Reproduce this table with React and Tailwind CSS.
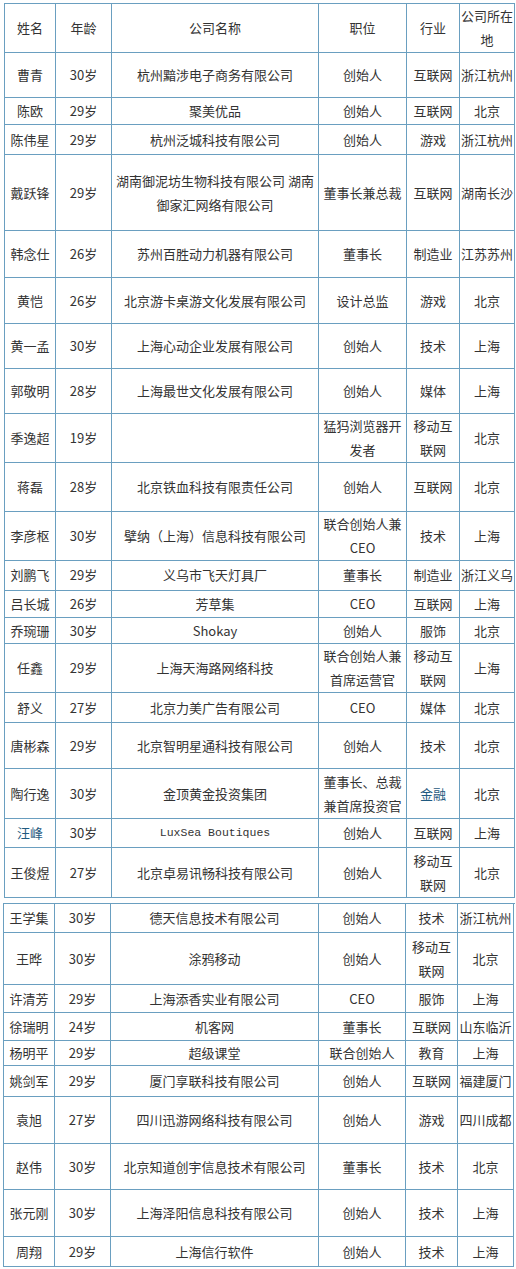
import clsx from 'clsx';

const colsA = 'grid-cols-[51px_56px_207px_88px_53px_55px]';
const colsB = 'grid-cols-[51px_56px_208px_87px_52px_56px]';

// each row: [h, name, age, company, title, industry, city]; '/' splits lines
const pieceOne = [
    ['h-[45px]', '曹青', '30岁', '杭州黯涉电子商务有限公司', '创始人', '互联网', '浙江杭州'],
    ['h-[27px]', '陈欧', '29岁', '聚美优品', '创始人', '互联网', '北京'],
    ['h-[30px]', '陈伟星', '29岁', '杭州泛城科技有限公司', '创始人', '游戏', '浙江杭州'],
    ['h-[76px]', '戴跃锋', '29岁', '湖南御泥坊生物科技有限公司 湖南/御家汇网络有限公司', '董事长兼总裁', '互联网', '湖南长沙'],
    ['h-[47px]', '韩念仕', '26岁', '苏州百胜动力机器有限公司', '董事长', '制造业', '江苏苏州'],
    ['h-[46px]', '黄恺', '26岁', '北京游卡桌游文化发展有限公司', '设计总监', '游戏', '北京'],
    ['h-[45px]', '黄一孟', '30岁', '上海心动企业发展有限公司', '创始人', '技术', '上海'],
    ['h-[45px]', '郭敬明', '28岁', '上海最世文化发展有限公司', '创始人', '媒体', '上海'],
    ['h-[48px]', '季逸超', '19岁', '', '猛犸浏览器开/发者', '移动互/联网', '北京'],
];

const pieceTwo = [
    ['h-[49px]', '蒋磊', '28岁', '北京铁血科技有限责任公司', '创始人', '互联网', '北京'],
    ['h-[48px]', '李彦枢', '30岁', '擘纳（上海）信息科技有限公司', '联合创始人兼/CEO', '技术', '上海'],
    ['h-[31px]', '刘鹏飞', '29岁', '义乌市飞天灯具厂', '董事长', '制造业', '浙江义乌'],
    ['h-[27px]', '吕长城', '26岁', '芳草集', 'CEO', '互联网', '上海'],
    ['h-[26px]', '乔琬珊', '30岁', 'Shokay', '创始人', '服饰', '北京'],
    ['h-[49px]', '任鑫', '29岁', '上海天海路网络科技', '联合创始人兼/首席运营官', '移动互/联网', '上海'],
    ['h-[30px]', '舒义', '27岁', '北京力美广告有限公司', 'CEO', '媒体', '北京'],
    ['h-[46px]', '唐彬森', '29岁', '北京智明星通科技有限公司', '创始人', '技术', '北京'],
    ['h-[50px]', '陶行逸', '30岁', '金顶黄金投资集团', '董事长、总裁/兼首席投资官', '金融', '北京'],
    ['h-[29px]', '汪峰', '30岁', 'LuxSea Boutiques', '创始人', '互联网', '上海'],
    ['h-[50px]', '王俊煜', '27岁', '北京卓易讯畅科技有限公司', '创始人', '移动互/联网', '北京'],
];

const pieceThree = [
    ['h-[29px]', '王学集', '30岁', '德天信息技术有限公司', '创始人', '技术', '浙江杭州'],
    ['h-[52px]', '王晔', '30岁', '涂鸦移动', '创始人', '移动互/联网', '北京'],
    ['h-[28px]', '许清芳', '29岁', '上海添香实业有限公司', 'CEO', '服饰', '上海'],
    ['h-[28px]', '徐瑞明', '24岁', '机客网', '董事长', '互联网', '山东临沂'],
    ['h-[25px]', '杨明平', '29岁', '超级课堂', '联合创始人', '教育', '上海'],
    ['h-[31px]', '姚剑军', '29岁', '厦门享联科技有限公司', '创始人', '互联网', '福建厦门'],
    ['h-[47px]', '袁旭', '27岁', '四川迅游网络科技有限公司', '创始人', '游戏', '四川成都'],
    ['h-[46px]', '赵伟', '30岁', '北京知道创宇信息技术有限公司', '董事长', '技术', '北京'],
    ['h-[47px]', '张元刚', '30岁', '上海泽阳信息科技有限公司', '创始人', '技术', '上海'],
    ['h-[30px]', '周翔', '29岁', '上海信行软件', '创始人', '技术', '上海'],
];

const blueText = ['汪峰', '金融'];

function Cell({ text }) {
    const lines = text.split('/');
    return (
        <div
            className={clsx(
                'flex items-center justify-center border-r border-b border-[#6a9fc0] text-center leading-[24px]',
                blueText.includes(text) && 'text-[#1f5a80]',
                text === 'LuxSea Boutiques' && "font-['Liberation_Mono',monospace] text-[11.5px]"
            )}
        >
            <div>
                {lines.map((line, i) => (
                    <div key={i} className="whitespace-nowrap">{line}</div>
                ))}
            </div>
        </div>
    );
}

function Piece({ rows, cols, className, header }) {
    return (
        <div className={clsx('border-l border-t border-[#6a9fc0]', className)}>
            {header && (
                <div className={clsx('grid h-[49px]', cols)}>
                    {['姓名', '年龄', '公司名称', '职位', '行业', '公司所在/地'].map((t) => (
                        <Cell key={t} text={t} />
                    ))}
                </div>
            )}
            {rows.map((row) => (
                <div key={row[1]} className={clsx('grid', cols, row[0])}>
                    {row.slice(1).map((t, i) => (
                        <Cell key={i} text={t} />
                    ))}
                </div>
            ))}
        </div>
    );
}

export default function App() {
    return (
        <div className="w-[516px] min-h-[1269px] bg-white pt-[3px] text-[13px] text-[#333] font-['Noto_Sans_CJK_SC',sans-serif]">
            <div className="flex w-[515px] flex-col">
                <Piece rows={pieceOne} cols={colsA} className="ml-[4px]" header />
                <Piece rows={pieceTwo} cols={colsA} className="ml-[4px]" />
                <Piece rows={pieceThree} cols={colsB} className="ml-[3px] mt-[5px]" />
            </div>
        </div>
    );
}
